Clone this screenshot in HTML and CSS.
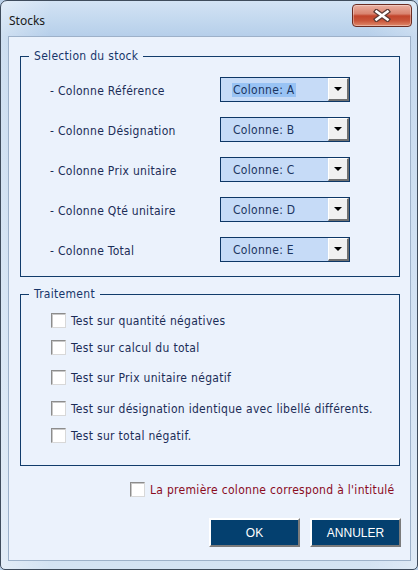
FILE: index.html
```html
<!DOCTYPE html>
<html lang="fr">
<head>
<meta charset="utf-8">
<title>Stocks</title>
<link rel="stylesheet" href="styles.css">
</head>
<body>
<div class="window">
  <div class="titlebar">
    <span class="title">Stocks</span>
    <div class="close">
      <svg width="18" height="13" viewBox="0 0 18 13" aria-hidden="true">
        <path d="M3.5 2.5 L14.5 10.5 M14.5 2.5 L3.5 10.5" stroke="#5a3a35" stroke-width="5" stroke-linecap="square" fill="none"/>
        <path d="M3.5 2.5 L14.5 10.5 M14.5 2.5 L3.5 10.5" stroke="#ffffff" stroke-width="2.6" stroke-linecap="square" fill="none"/>
      </svg>
    </div>
  </div>
  <div class="client">
    <fieldset class="group group-stock">
      <legend>Selection du stock</legend>
      <div class="rows">
        <div class="row"><span class="label">- Colonne Référence</span><div class="combo"><span class="value selected">Colonne: A</span><span class="drop"><span class="arrow"></span></span></div></div>
        <div class="row"><span class="label">- Colonne Désignation</span><div class="combo"><span class="value">Colonne: B</span><span class="drop"><span class="arrow"></span></span></div></div>
        <div class="row"><span class="label">- Colonne Prix unitaire</span><div class="combo"><span class="value">Colonne: C</span><span class="drop"><span class="arrow"></span></span></div></div>
        <div class="row"><span class="label">- Colonne Qté unitaire</span><div class="combo"><span class="value">Colonne: D</span><span class="drop"><span class="arrow"></span></span></div></div>
        <div class="row"><span class="label">- Colonne Total</span><div class="combo"><span class="value">Colonne: E</span><span class="drop"><span class="arrow"></span></span></div></div>
      </div>
    </fieldset>
    <fieldset class="group group-traitement">
      <legend>Traitement</legend>
      <div class="checks">
        <div class="check"><span class="box"></span><span>Test sur quantité négatives</span></div>
        <div class="check"><span class="box"></span><span>Test sur calcul du total</span></div>
        <div class="check"><span class="box"></span><span>Test sur Prix unitaire négatif</span></div>
        <div class="check"><span class="box"></span><span>Test sur désignation identique avec libellé différents.</span></div>
        <div class="check"><span class="box"></span><span>Test sur total négatif.</span></div>
      </div>
    </fieldset>
    <div class="check header-check"><span class="box"></span><span>La première colonne correspond à l'intitulé</span></div>
    <div class="buttons">
      <button class="btn">OK</button>
      <button class="btn">ANNULER</button>
    </div>
  </div>
</div>
</body>
</html>
```
FILE: styles.css
```css
html, body {
  margin: 0;
  padding: 0;
  width: 418px;
  height: 570px;
  overflow: hidden;
  background: #b9cfe7;
}

.window {
  box-sizing: border-box;
  width: 418px;
  height: 570px;
  border: 1px solid #3f4c5c;
  border-radius: 7px 7px 5px 5px;
  padding: 0 6px 8px 7px;
  display: flex;
  flex-direction: column;
  background:
    linear-gradient(90deg, rgba(255,255,255,0.35), rgba(255,255,255,0) 12%, rgba(255,255,255,0) 88%, rgba(255,255,255,0.25)),
    linear-gradient(180deg, #d3e3f4 0px, #c4d9ef 18px, #b6cfea 35px, #c7dbf0 60%, #d4e3f3 100%);
}

.titlebar {
  height: 35px;
  flex: none;
  display: flex;
  justify-content: space-between;
  align-items: flex-start;
}

.title {
  font-family: "Noto Sans", "Open Sans", sans-serif;
  font-size: 12px;
  color: #1a1a1a;
  margin: 12px 0 0 1px;
  line-height: 16px;
}

.close {
  box-sizing: border-box;
  width: 60px;
  height: 23px;
  margin-top: 3px;
  margin-right: -1px;
  border: 1px solid #6b2c22;
  border-radius: 4px;
  background: linear-gradient(180deg, #eab0a2 0%, #d98470 42%, #c2452c 52%, #c9553a 75%, #df8a6c 100%);
  box-shadow: inset 0 0 0 1px rgba(255,255,255,0.35);
  display: flex;
  align-items: center;
  justify-content: center;
}

.client {
  box-sizing: border-box;
  width: 403px;
  height: 525px;
  flex: none;
  border: 1px solid #9db1c9;
  background: #ebf2fc;
  padding: 11px 10px 0 11px;
  display: flex;
  flex-direction: column;
  font-family: "DejaVu Sans Condensed", "DejaVu Sans", sans-serif;
  font-size: 12px;
  letter-spacing: 0.3px;
  color: #1b2d57;
}

.group {
  margin: 0;
  padding: 0;
  border: 1px solid #113c6b;
  min-inline-size: 0;
}

.group legend {
  padding: 0 5px;
  margin-left: 8px;
  line-height: 16px;
  color: #17366a;
}

.rows {
  display: flex;
  flex-direction: column;
  gap: 15px;
  padding: 13px 0 14px 29px;
}

.row {
  display: flex;
  align-items: center;
  height: 25px;
}

.label {
  width: 170px;
  flex: none;
  padding-top: 3px;
}

.combo {
  box-sizing: border-box;
  width: 130px;
  height: 25px;
  border: 1px solid #0d3766;
  background: #c6dbf7;
  display: flex;
  align-items: center;
  justify-content: space-between;
}

.value {
  margin-left: 11px;
  padding: 0 1px;
  line-height: 14px;
  color: #1b3560;
}

.value.selected {
  background: #99c3f4;
}

.drop {
  box-sizing: border-box;
  width: 21px;
  height: 23px;
  align-self: flex-start;
  border-top: 1px solid #ffffff;
  border-left: 1px solid #ffffff;
  border-right: 2px solid #6f6f6f;
  border-bottom: 2px solid #6f6f6f;
  background: #f0f0f0;
  display: flex;
  align-items: center;
  justify-content: center;
}

.arrow {
  width: 0;
  height: 0;
  border-left: 4px solid transparent;
  border-right: 4px solid transparent;
  border-top: 4px solid #000;
}

.group-traitement {
  margin-top: 9px;
}

.checks {
  display: flex;
  flex-direction: column;
  padding: 11px 0 22px 30px;
}

.check {
  display: flex;
  align-items: center;
  height: 15px;
  gap: 5px;
}

.checks .check:nth-child(2) { margin-top: 12px; }
.checks .check:nth-child(3) { margin-top: 15px; }
.checks .check:nth-child(4) { margin-top: 16px; }
.checks .check:nth-child(5) { margin-top: 12px; }

.box {
  box-sizing: border-box;
  width: 15px;
  height: 15px;
  flex: none;
  background: #ffffff;
  border-top: 1px solid #8c8c8c;
  border-left: 1px solid #8c8c8c;
  border-right: 1px solid #d8d8d8;
  border-bottom: 1px solid #d8d8d8;
  box-shadow: inset 1px 1px 0 #c8c8c8;
}

.header-check {
  margin: 16px 0 0 110px;
  color: #8a0c1e;
}

.buttons {
  display: flex;
  justify-content: flex-end;
  gap: 10px;
  margin-top: 21px;
  margin-right: -1px;
}

.btn {
  box-sizing: border-box;
  width: 91px;
  height: 29px;
  margin: 0;
  padding: 0;
  border-style: solid;
  border-width: 2px;
  border-color: #ffffff #7b7b7b #7b7b7b #ffffff;
  background: #04406f;
  color: #ffffff;
  font-family: "Liberation Sans", Arial, sans-serif;
  font-size: 12px;
}
```
